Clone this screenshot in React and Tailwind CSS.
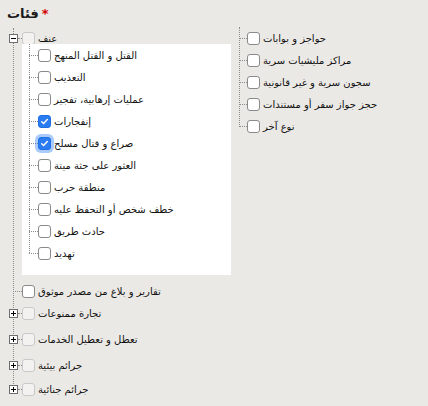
import React from 'react';

const line = 'border-[#8c8c8c] border-dotted';

const children = [
  { label: 'القتل و القتل المنهج' },
  { label: 'التعذيب' },
  { label: 'عمليات إرهابية، تفجير' },
  { label: 'إنفجارات', checked: true },
  { label: 'صراع و قتال مسلح', checked: true, focused: true },
  { label: 'العثور على جثة ميتة' },
  { label: 'منطقة حرب' },
  { label: 'خطف شخص أو التحفظ عليه' },
  { label: 'حادث طريق' },
  { label: 'تهديد' },
];

const bottomItems = [
  { label: 'تقارير و بلاغ من مصدر موثوق', leaf: true, mt: 'mt-[5px]' },
  { label: 'تجارة ممنوعات', mt: 'mt-0' },
  { label: 'تعطل و تعطيل الخدمات', mt: 'mt-[4px]' },
  { label: 'جرائم بيئية', mt: 'mt-[4px]' },
  { label: 'جرائم جنائية', mt: 'mt-[2px]' },
];

const rightItems = [
  'حواجز و بوابات',
  'مراكز مليشيات سرية',
  'سجون سرية و غير قانونية',
  'حجز جواز سفر أو مستندات',
  'نوع آخر',
];

function Expander({ open }) {
  return (
    <span className="relative z-10 flex h-[9px] w-[9px] shrink-0 items-center justify-center border border-[#6e6e6e] bg-white">
      <span className="absolute h-px w-[5px] bg-black" />
      {!open && <span className="absolute h-[5px] w-px bg-black" />}
    </span>
  );
}

function Check({ checked, disabled, focused }) {
  let cls = 'border-[#8a8a8a] bg-white';
  if (disabled) cls = 'border-[#c9c9c9] bg-[#f3f2f0]';
  if (checked) cls = 'border-[#1f6fe5] bg-[#2b7cf0]';
  return (
    <span
      role="checkbox"
      aria-checked={!!checked}
      className={`flex h-[13px] w-[13px] shrink-0 items-center justify-center rounded-[3px] border ${cls} ${
        focused ? 'shadow-[0_0_0_3px_rgba(43,124,240,0.4)]' : ''
      }`}
    >
      {checked && (
        <svg viewBox="0 0 12 12" className="h-[9px] w-[9px]">
          <path d="M2.3 6.3 L4.8 8.7 L9.7 3.4" fill="none" stroke="white" strokeWidth="1.9" strokeLinecap="round" strokeLinejoin="round" />
        </svg>
      )}
    </span>
  );
}

export default function App() {
  return (
    <div className="h-[406px] w-full overflow-hidden bg-[#ebe9e6] text-[10px] text-[#111] [font-family:'DejaVu_Sans',sans-serif]">
      {/* Title */}
      <div className="flex h-[27px] items-start pl-[7px] pt-[4px] text-[13px] font-bold text-[#1a1a1a]">
        <span>فئات</span>
        <span className="ml-[3px] text-[#d40000]">*</span>
      </div>

      <div className="flex">
        {/* Left tree */}
        <div className="relative w-[231px] shrink-0">
          <span className={`absolute left-[13px] top-[1px] h-[362px] border-l ${line}`} />

          {/* Root: عنف */}
          <div className="flex h-[17px] items-center pl-[9px] pt-[5px]">
            <Expander open />
            <span className={`w-[4px] border-t ${line}`} />
            <Check disabled />
            <span className="ml-[3px]">عنف</span>
          </div>

          <div className="relative ml-[22px] w-[209px] bg-white pb-[11px]">
            <span className={`absolute left-[7px] top-0 h-[209px] border-l ${line}`} />
            {children.map((c) => (
              <div key={c.label} className="flex h-[22px] items-center pl-[7px]">
                <span className={`w-[9px] border-t ${line}`} />
                <Check checked={c.checked} focused={c.focused} />
                <span className="ml-[3px] whitespace-nowrap">{c.label}</span>
              </div>
            ))}
          </div>

          {bottomItems.map((item) =>
            item.leaf ? (
              <div key={item.label} className={`flex h-[22px] items-center pl-[13px] ${item.mt}`}>
                <span className={`w-[9px] border-t ${line}`} />
                <Check />
                <span className="ml-[3px] whitespace-nowrap">{item.label}</span>
              </div>
            ) : (
              <div key={item.label} className={`flex h-[22px] items-center pl-[9px] ${item.mt}`}>
                <Expander />
                <span className={`w-[4px] border-t ${line}`} />
                <Check disabled />
                <span className="ml-[3px] whitespace-nowrap">{item.label}</span>
              </div>
            )
          )}
        </div>

        {/* Right tree */}
        <div className="relative flex-1">
          <span className={`absolute left-[8px] top-0 h-[100px] border-l ${line}`} />
          {rightItems.map((label) => (
            <div key={label} className="flex h-[22px] items-center pl-[8px]">
              <span className={`w-[8px] border-t ${line}`} />
              <Check />
              <span className="ml-[3px] whitespace-nowrap">{label}</span>
            </div>
          ))}
        </div>
      </div>
    </div>
  );
}
